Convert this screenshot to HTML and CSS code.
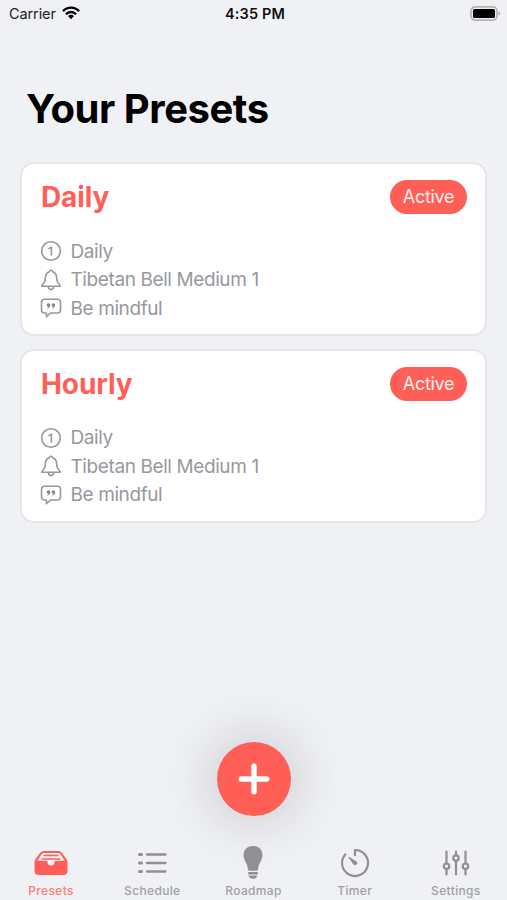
FILE: index.html
```html
<!DOCTYPE html>
<html lang="en">
<head>
<meta charset="utf-8">
<title>Your Presets</title>
<link rel="stylesheet" href="styles.css">
</head>
<body>
<svg class="symbols" aria-hidden="true">
  <symbol id="bell" viewBox="0 0 22 22"><path d="M1.8 17.2H20.2C20.2 15.4 17.3 14.5 16.9 11.2L16.5 7.5C16.2 4.8 14.4 3.4 12.7 2.8C12.3 .8 9.7 .8 9.3 2.8C7.6 3.4 5.8 4.8 5.500 7.500L5.100 11.200C4.700 14.500 1.800 15.400 1.800 17.200ZM8.400 17.600C8.400 21.600 13.600 21.600 13.600 17.600"/></symbol>
  <symbol id="quote" viewBox="0 0 22 22"><path d="M4.500 2.300H17.500Q20.500 2.300 20.500 5.300V13Q20.500 16 17.500 16H10.700L6.400 19.700V16H4.500Q1.500 16 1.500 13V5.300Q1.500 2.300 4.500 2.300Z"/><g class="solid"><circle cx="8.500" cy="8" r="1.800"/><path d="M10.300 8Q10.400 10.700 7.600 11.700L7.300 11Q8.700 10.200 8.600 9Z"/><circle cx="13.400" cy="8" r="1.800"/><path d="M15.200 8Q15.300 10.700 12.500 11.700L12.200 11Q13.600 10.200 13.500 9Z"/></g></symbol>
  <symbol id="one" viewBox="0 0 22 22"><circle cx="11" cy="11" r="9.300"/><path d="M9 8.600L11.400 7.200V15"/></symbol>
</svg>
<div class="screen">
  <header class="status">
    <div class="carrier"><span>Carrier</span>
      <svg width="18" height="14" viewBox="0 0 18 14" fill="none" stroke="#000" stroke-width="2.400"><path d="M.9 5.100C5.400 .4 12.600 .4 17.100 5.100M3.900 8.200C6.700 5.200 11.300 5.200 14.100 8.200"/><path d="M6 10.100Q9 7.400 12 10.100L9 13.300Z" fill="#000" stroke="none"/></svg>
    </div>
    <time class="clock">4:35 PM</time>
    <svg class="battery" width="31" height="15" viewBox="0 0 31 15"><rect x="1" y=".9" width="26" height="13.200" rx="4" fill="#ededee" stroke="#b5b5b7" stroke-width="1.700"/><rect x="3" y="3" width="22" height="9" rx="1.600"/><path d="M28.600 5.300Q31.500 7.500 28.600 9.700Z" fill="#a5a5a7"/></svg>
  </header>
  <main>
    <h1>Your Presets</h1>
    <section class="card">
      <div class="card-head"><h2>Daily</h2><span class="badge">Active</span></div>
      <ul>
        <li><svg class="icon"><use href="#one"/></svg><span>Daily</span></li>
        <li><svg class="icon"><use href="#bell"/></svg><span>Tibetan Bell Medium 1</span></li>
        <li><svg class="icon"><use href="#quote"/></svg><span>Be mindful</span></li>
      </ul>
    </section>
    <section class="card">
      <div class="card-head"><h2>Hourly</h2><span class="badge">Active</span></div>
      <ul>
        <li><svg class="icon"><use href="#one"/></svg><span>Daily</span></li>
        <li><svg class="icon"><use href="#bell"/></svg><span>Tibetan Bell Medium 1</span></li>
        <li><svg class="icon"><use href="#quote"/></svg><span>Be mindful</span></li>
      </ul>
    </section>
  </main>
  <button class="add" aria-label="Add preset"><svg width="32" height="32" viewBox="0 0 32 32" fill="none" stroke="#fff" stroke-width="5.400" stroke-linecap="round"><path d="M16 3.200V28.800M3.200 16H28.800"/></svg></button>
  <nav>
    <a class="tab active"><svg width="36" height="36" viewBox="0 0 36 36"><path d="M10.500 6H25.500Q27.500 6 28.800 7.700L33.400 14Q34.500 15.500 34.500 17V25.500Q34.500 30 30 30H6Q1.500 30 1.500 25.500V17Q1.500 15.500 2.600 14L7.200 7.700Q8.500 6 10.500 6Z" fill="currentColor"/><path d="M10.600 8H25.400Q26.500 8 27.200 9L31.700 15.700H22.500Q21.500 15.700 21.500 17A3.500 3.500 0 0 1 14.500 17Q14.500 15.700 13.500 15.700H4.300L8.800 9Q9.500 8 10.600 8Z" fill="#f5f2f4"/><path d="M11.200 10.500H24.800M9.300 14H26.700" stroke="currentColor" stroke-width="1.400" stroke-linecap="round"/></svg><span>Presets</span></a>
    <a class="tab"><svg width="36" height="36" viewBox="0 0 36 36" fill="none" stroke="currentColor" stroke-linecap="round"><path d="M13 9.500H31.500M13 18H31.500M13 26.500H31.500" stroke-width="2.300"/><path d="M5.500 9.500H7.500M5.500 18H7.500M5.500 26.500H7.500" stroke-width="3"/></svg><span>Schedule</span></a>
    <a class="tab"><svg width="36" height="36" viewBox="0 0 36 36" fill="currentColor"><path d="M18 1C11.500 1 8.100 5.600 8.600 11C9 16 12.500 18.200 12.800 23.800Q12.900 25.700 14.500 25.700H21.500Q23.100 25.700 23.200 23.800C23.500 18.200 27 16 27.400 11C27.900 5.600 24.500 1 18 1ZM13.200 27H22.800V29Q22.800 29.500 22.200 29.500H13.800Q13.200 29.500 13.200 29ZM13.500 30.500H22.500Q21.500 33.800 18 33.800Q14.500 33.800 13.500 30.500Z"/></svg><span>Roadmap</span></a>
    <a class="tab"><svg width="36" height="36" viewBox="0 0 36 36" fill="none" stroke="currentColor" stroke-width="2.200" stroke-linecap="round"><path d="M18 10.200V5A13 13 0 1 1 8.300 9.400"/><path d="M12.200 12.500L19.700 17.100A1.900 1.900 0 0 1 17.200 19.600Z" fill="currentColor" stroke-width="1"/></svg><span>Timer</span></a>
    <a class="tab"><svg width="36" height="36" viewBox="0 0 36 36" fill="none" stroke="currentColor" stroke-width="2.200" stroke-linecap="round"><path d="M8.500 6.500V18.200M8.500 24.200V29.500M18 6.500V10M18 16V29.500M27.500 6.500V18.200M27.500 24.200V29.500"/><circle cx="8.500" cy="21.200" r="2.700"/><circle cx="18" cy="13" r="2.700"/><circle cx="27.500" cy="21.200" r="2.700"/></svg><span>Settings</span></a>
  </nav>
</div>
</body>
</html>
```
FILE: styles.css
```css
* { box-sizing: border-box; }
body { margin: 0; background: #f0f1f5; font-family: Inter, "Liberation Sans", sans-serif; }
.symbols { position: absolute; width: 0; height: 0; }
.screen { width: 507px; height: 900px; display: flex; flex-direction: column; overflow: hidden; position: relative; }
.status { height: 26px; display: grid; grid-template-columns: 1fr auto 1fr; align-items: center; padding: 0 6px 0 9px; flex: none; }
.carrier { display: flex; align-items: center; gap: 6px; font-size: 14.500px; letter-spacing: -.1px; color: #222; }
.clock { font-size: 14.500px; font-weight: 600; color: #111; letter-spacing: .15px; }
.battery { justify-self: end; }
main { padding: 57px 20px 0 20px; flex: 1; }
h1 { margin: 0 0 27px 6px; font-size: 40px; line-height: 52px; font-weight: 700; letter-spacing: -.45px; }
.card { height: 174px; margin-bottom: 12.500px; padding: 15px 18px 0 19px; border: 2.500px solid #e5e6e9; border-radius: 14px; background: #fff; }
.card-head { display: flex; align-items: center; justify-content: space-between; height: 36px; }
h2 { margin: 0; font-size: 28px; line-height: 36px; font-weight: 700; letter-spacing: -.1px; color: #ff5f57; }
.badge { width: 77px; height: 34px; border-radius: 17px; background: #ff5f57; color: #fff0ee; font-size: 18px; line-height: 34px; text-align: center; letter-spacing: -.3px; }
ul { list-style: none; margin: 22px 0 0 -1px; padding: 0; }
li { display: flex; align-items: center; gap: 8.500px; height: 28.500px; font-size: 19px; color: #98989f; letter-spacing: -.4px; }
.icon { width: 22px; height: 22px; fill: none; stroke: #98989d; stroke-width: 1.600; stroke-linejoin: round; stroke-linecap: round; }
.solid { fill: #85858b; stroke: none; }
.add { flex: none; align-self: center; width: 74px; height: 74px; margin: 0 0 29px; padding: 0; border: 0; border-radius: 50%; background: #ff5f57; display: flex; align-items: center; justify-content: center; box-shadow: 0 0 50px 8px rgba(90, 100, 100, .24); }
nav { position: relative; height: 55px; flex: none; display: grid; grid-template-columns: repeat(5, 1fr); padding: 0 .5px; }
.tab { display: flex; flex-direction: column; align-items: center; color: #8f8f94; }
.tab span { font-size: 12px; line-height: 18px; font-weight: 500; color: #a0a0a4; letter-spacing: .35px; margin-top: 1px; }
.tab.active { color: #ff5f57; }
.tab.active span { color: #ff7e77; }
```
